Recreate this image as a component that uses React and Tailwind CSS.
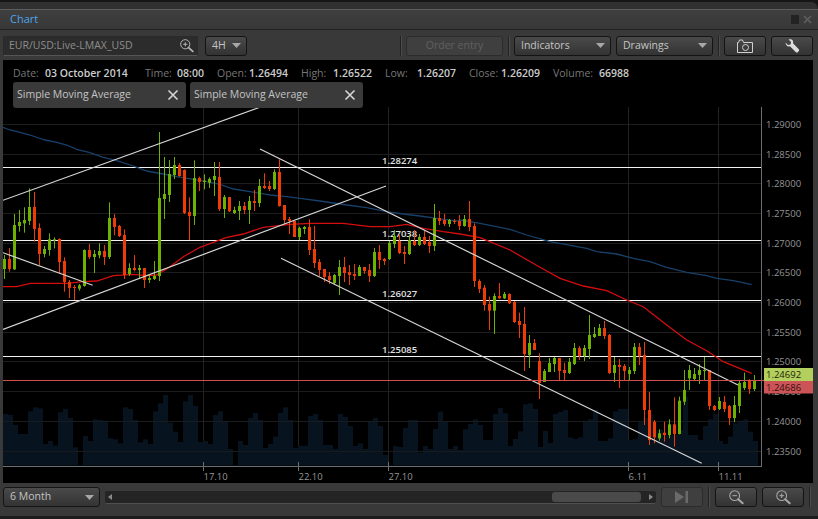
import React from "react";

// [colour(1 green / 0 red), wickTop, bodyTop, bodyBottom, wickBottom] in zoomed crop units
const blocks = [
  [110, [
    [1,435,447,477,507],[0,414,447,477,485],[1,312,345,478,480],[1,300,336,348,365],[1,292,330,340,368],[1,235,291,333,345],[0,246,291,357,395],[0,340,354,432,465],[1,408,417,432,442],[1,370,388,420,437],[1,382,388,390,415],[0,385,387,456,490],[0,442,453,516,545],[0,510,516,534,564],[0,525,531,534,570],[1,522,526,536,542],[1,418,420,528,530],[0,402,420,441,447],[1,420,432,441,489],[1,400,423,436,445],[0,405,423,441,465],[1,277,324,441,447],[0,312,324,351,376],[0,345,348,378,381],[0,358,375,495,507],[1,460,474,492,498],[0,435,474,480,484],[1,465,474,480,507],[0,474,474,510,534],[1,492,504,510,519],[1,453,498,507,510],[1,66,264,498,513],[1,141,252,267,327],[1,150,192,255,276],[1,141,165,195,207],[0,159,165,198,200],[0,178,180,309,312],[0,262,306,318,390],[1,151,204,318,345],[0,200,204,216,243],[1,193,212,216,238],[1,202,207,218,234],[1,156,198,210,258],[0,156,201,297,303],[1,255,261,297,324],[0,261,261,304,306],[1,290,300,309,312],[1,273,288,303,330],[0,276,288,300,312],[1,258,273,300,342],[0,240,273,279,303],[1,207,228,279,291],[0,190,228,234,237],[0,213,228,237,243],[1,178,186,237,240],
    [0,148,186,288,290],[0,285,285,330,342],[0,321,327,333,372],[0,333,333,381,381],[1,350,354,381,390],[1,348,351,357,372],[0,328,351,420,435],[0,348,417,459,474],[0,447,456,480,498],[0,477,477,501,516],[0,486,498,510,522],[1,492,495,519,522],[1,450,471,498,555],[0,441,471,489,516],[0,465,486,495,525],[0,462,492,498,510],[1,465,471,498,498],[0,471,471,483,492],[0,462,480,498,516],[1,414,426,498,501],[0,405,426,450,477],[0,444,447,453,465],[1,393,399,447,450],[1,360,378,402,414],[0,375,393,429,432],[0,408,426,432,462],[1,375,390,432,435],[0,360,393,405,408],[1,372,381,405,408],[0,360,381,402,405],[0,378,396,408,429],[1,282,324,408,423],[0,303,324,333,345],[0,312,330,342,348],[1,327,330,342,351],[0,327,333,336,342],[0,315,333,348,360],[1,315,327,348,350],[0,273,327,351,363],
  ]],
  [190, [
    [0,100,108,273,291],[0,268,273,297,309],[0,285,293,345,362],[0,320,342,362,420],[1,310,318,362,432],[0,279,318,325,327],[1,306,312,325,327],[0,310,312,340,342],[0,333,336,396,399],[0,368,393,405,444],[0,351,402,492,543],[1,435,459,495,534],[0,447,459,480,480],[0,490,513,579,627],[1,537,543,576,576],[1,504,519,546,546],[1,501,504,522,546],[0,504,504,543,570],[0,518,540,549,570],[1,504,516,549,552],[1,459,474,522,525],[0,468,474,498,510],[1,465,474,498,513],[1,375,435,477,507],[1,411,432,441,444],[1,402,414,438,438],[0,393,414,438,447],[0,432,435,549,552],[1,501,525,549,576],[0,507,525,531,594],[0,522,528,543,570],[1,531,540,552,570],[1,459,471,543,552],[0,459,471,498,525],[0,456,495,660,705],
    [0,606,660,750,765],
  ]],
  [380, [
    [0,120,125,172,190],[1,148,160,175,182],[0,125,158,165,185],[1,118,133,165,175],[0,52,133,162,200],[1,50,62,162,163],[1,-30,30,65,75],[1,-45,-30,-5,30],
  ]],
  [0, [
    [1,1104,1122,1137,1140],[1,1092,1110,1125,1152],[1,1071,1110,1113,1140],[0,1110,1110,1218,1230],[0,1215,1218,1230,1233],[1,1191,1203,1227,1230],[0,1188,1206,1227,1236],[0,1215,1218,1254,1275],[1,1188,1215,1254,1266],[1,1140,1149,1218,1239],[1,1118,1146,1164,1170],[0,1137,1143,1167,1182],[1,1125,1140,1167,1173],
  ]],
];

const candles = [];
blocks.forEach(([y0, rows]) => rows.forEach((r) => {
  candles.push({ up: r[0], wt: y0 + r[1] / 3, bt: y0 + r[2] / 3, bb: y0 + r[3] / 3, wb: y0 + r[4] / 3 });
}));

const volTops = [102,105,135,162,162,94,82,85,192,183,197,97,87,114,202,255,168,183,118,120,122,175,178,190,82,87,120,187,178,192,94,70,45,128,155,186,64,45,78,186,183,192,105,94,126,207,255,183,195,114,99,120,204,192,170,99,82,120,204,197,197,108,102,120,195,195,207,102,111,138,198,190,207,126,114,138,225,255,198,201,144,120,120,
  218,198,207,147,95,125,207,198,210,148,132,118,135,180,180,102,84,100,198,177,154,73,70,87,201,153,189,102,96,90,172,177,172,122,118,90,183,183,175,94,87,87,180,178,127,114,100,150,150,165,165,165,150,50,165,165,180,138,118,102,183,192,170,130,122,118,155,183];

const pts = (x0, y0, list) => list.map(([x, y]) => [x0 + x / 3, y0 + y / 3]);
const blue = [
  ...pts(0, 110, [[9,52],[30,60],[60,67],[90,75],[135,90],[170,97],[200,105],[230,118],[270,128],[310,142],[350,152],[400,168],[440,183],[490,192],[530,200],[580,208],[620,215],[660,223],[700,237],[750,245],[800,253]]),
  ...pts(270, 110, [[0,255],[50,260],[90,265],[150,273],[230,285],[290,293],[350,305],[400,312],[450,318],[500,325],[560,333]]),
  ...pts(460, 190, [[0,90],[60,100],[150,118],[200,135],[270,155],[380,175],[410,185],[470,192],[520,205],[570,215],[620,232],[680,247],[740,257],[770,265],[820,272],[875,284]]),
];
const red = [
  ...pts(0, 110, [[9,530],[50,530],[90,520],[200,520],[250,515],[290,513],[340,497],[400,493],[440,497],[470,495],[510,470],[550,440],[600,412],[680,382],[730,372],[790,352]]),
  ...pts(270, 110, [[0,350],[60,343],[120,340],[220,340],[300,350],[360,350],[410,343],[460,355],[520,365]]),
  ...pts(460, 190, [[0,132],[60,143],[150,180],[240,232],[300,265],[370,288],[440,302],[500,330],[550,350],[620,405],[680,450],[740,482],[790,515],[875,550]]),
];
const toPath = (a) => a.map((p) => p[0].toFixed(1) + "," + p[1].toFixed(1)).join(" ");

const gridY = [124.5,154.5,183.5,213.5,243.5,272.5,302.5,332.5,361.5,391.5,421.5,451.5];
const priceLabels = [[124.5,"1.29000"],[154.5,"1.28500"],[183.5,"1.28000"],[213.5,"1.27500"],[243.5,"1.27000"],[272.5,"1.26500"],[302.5,"1.26000"],[332.5,"1.25500"],[361.5,"1.25000"],[391.5,"1.24500"],[421.5,"1.24000"],[451.5,"1.23500"]];
const dates = [[203.5,"17.10"],[298.5,"22.10"],[388.5,"27.10"],[628.5,"6.11"],[718.5,"11.11"]];
const levels = [[167.5,"1.28274"],[240.5,"1.27038"],[300.5,"1.26027"],[356.5,"1.25085"]];
const uiFont = "'Open Sans','Noto Sans',sans-serif";

function Chart() {
  return (
    <svg className="absolute inset-0 h-full w-full" viewBox="3 60 810 423" style={{ fontFamily: uiFont }}>
      {gridY.map((y) => <line key={y} x1="3" x2="761" y1={y} y2={y} stroke="#1d1d1d" />)}
      {dates.map(([x]) => <line key={x} x1={x} x2={x} y1="107" y2="466" stroke="#222222" />)}
      {volTops.map((t, i) => (
        <rect key={i} x={3 + 5 * i} y={380 + t / 3} width="5" height={85.5 - t / 3} fill="#071420" />
      ))}
      {gridY.slice(-3).map((y) => <line key={y} x1="3" x2="761" y1={y} y2={y} stroke="#1d1d1d" strokeOpacity="0.8" />)}
      <line x1="3" x2="761" y1="466.5" y2="466.5" stroke="#6d6d6d" />
      <line x1="761.5" x2="761.5" y1="107" y2="467" stroke="#6d6d6d" />
      {dates.map(([x, l]) => (
        <g key={x}>
          <line x1={x} x2={x} y1="462" y2="471" stroke="#6d6d6d" />
          <text x={x} y="480" fontSize="9.5" fill="#959595">{l}</text>
        </g>
      ))}
      {priceLabels.map(([y, l]) => (
        <text key={l} x="766" y={y + 3.5} fontSize="9.5" fill="#959595">{l}</text>
      ))}
      {levels.map(([y]) => <line key={y} x1="3" x2="761" y1={y} y2={y} stroke="#f2f2f2" strokeWidth="1" />)}
      {levels.map(([y, l]) => (
        <text key={l} x="382" y={y - 4} fontSize="9.5" fontWeight="600" fill="#e2e2e2">{l}</text>
      ))}
      <polyline points={toPath(blue)} fill="none" stroke="#17406a" strokeWidth="1.3" />
      <polyline points={toPath(red)} fill="none" stroke="#d40d0d" strokeWidth="1.3" />
      {candles.map((c, i) => {
        const x = 4.5 + 5 * i;
        const col = c.up ? "#6fb100" : "#ee3c06";
        return (
          <g key={i}>
            <line x1={x} x2={x} y1={c.wt} y2={c.wb} stroke={col} strokeWidth="1" />
            <rect x={x - 1.5} y={c.bt} width="3" height={Math.max(1, c.bb - c.bt)} fill={col} />
          </g>
        );
      })}
      <g stroke="#d6d6d6" strokeWidth="1.2">
        <line x1="3" y1="200.3" x2="262" y2="106.5" />
        <line x1="3" y1="329.5" x2="386" y2="186" />
        <line x1="3" y1="252.7" x2="92.7" y2="285.3" />
        <line x1="260" y1="149" x2="738" y2="385" />
        <line x1="281" y1="258.3" x2="701.7" y2="463.3" />
      </g>
      <line x1="3" x2="764" y1="380.5" y2="380.5" stroke="#d0504e" />
      <rect x="764" y="368" width="50" height="13" fill="#b3cf5d" />
      <rect x="764" y="381" width="50" height="12.5" fill="#cc5456" />
      <text x="766" y="378" fontSize="9.5" fill="#1c2208">1.24692</text>
      <text x="766" y="391" fontSize="9.5" fill="#331010">1.24686</text>
    </svg>
  );
}

const Caret = () => (
  <svg width="9" height="5" viewBox="0 0 9 5"><path d="M0 0h9L4.5 5z" fill="#a8a8a8" /></svg>
);

const Lens = ({ plus, minus, size = 18, color = "#b4b4b4" }) => (
  <svg width={size} height={size} viewBox="0 0 18 18" fill="none" stroke={color}>
    <circle cx="7.5" cy="7.5" r="5.5" strokeWidth="1.2" />
    {(plus || minus) && <path d="M5 7.5h5" strokeWidth="1.2" />}
    {plus && <path d="M7.5 5v5" strokeWidth="1.2" />}
    <path d="M11.5 11.5l5 4.5" strokeWidth="2.2" strokeLinecap="round" />
  </svg>
);

const Sep = () => <div className="h-[20px] w-[2px] shrink-0 border-l border-[#222222] bg-[#4c4c4c]" />;

const btn =
  "flex h-[20px] shrink-0 items-center rounded-[3px] border border-[#141414] bg-gradient-to-b from-[#4a4a4a] to-[#333333] text-[10.5px] text-[#c4c4c4]";

const Info = ({ l, v, lw, vw }) => (
  <div className="flex items-center">
    <span className="text-[#777777]" style={{ width: lw }}>{l}</span>
    <span className="font-semibold text-[#cccccc]" style={{ width: vw }}>{v}</span>
  </div>
);

const Chip = () => (
  <div className="flex h-[26px] w-[173px] items-center justify-between rounded-[3px] bg-[#3a3a3a] pl-[4px] pr-[7px] text-[10.5px] text-[#c4c4c4]">
    <span>Simple Moving Average</span>
    <svg width="12" height="12" viewBox="0 0 12 12" stroke="#d6d6d6" strokeWidth="1.6"><path d="M1.5 1.5l9 9M10.5 1.5l-9 9" /></svg>
  </div>
);

export default function App() {
  return (
    <div className="flex h-[519px] w-[818px] flex-col overflow-hidden bg-[#161616] text-[10.5px]" style={{ fontFamily: uiFont }}>
      <div className="flex h-full flex-col pt-[2px]">
        <div className="h-[7px] shrink-0 rounded-tr-[8px] bg-[#303030]" />
        <div className="flex h-[20px] shrink-0 items-center justify-between border-t border-[#5e5e5e] bg-gradient-to-b from-[#3f3f3f] to-[#383838] pl-[10px] pr-[6px]">
          <span className="text-[11px] font-medium text-[#4da3ea]">Chart</span>
          <div className="flex items-center gap-[4px]">
            <div className="h-[9px] w-[8px] bg-[#232323]" />
            <svg width="9" height="9" viewBox="0 0 9 9" stroke="#5f5f5f" strokeWidth="1.6"><path d="M1 1l7 7M8 1l-7 7" /></svg>
          </div>
        </div>
        <div className="flex h-[31px] shrink-0 items-center border-t border-[#232323] bg-[#393939] pl-[3px] pr-[5px] pt-[1px]">
          <div className="flex h-[20px] w-[195px] items-center justify-between border border-[#2a2a2a] border-b-[#555555] bg-[#2c2c2c] pl-[5px] pr-[3px] text-[#8e8e8e]">
            <span>EUR/USD:Live-LMAX_USD</span>
            <Lens plus size={15} />
          </div>
          <div className={btn + " ml-[7px] w-[42px] justify-between pl-[6px] pr-[5px]"}>
            <span>4H</span><Caret />
          </div>
          <div className="ml-[153px]"><Sep /></div>
          <div className="ml-[4px] flex h-[20px] w-[97px] items-center justify-center rounded-[3px] border border-[#2c2c2c] bg-[#3f3f3f] text-[#606060]">Order entry</div>
          <div className="ml-[5px]"><Sep /></div>
          <div className={btn + " ml-[4px] w-[97px] justify-between pl-[6px] pr-[5px]"}>
            <span>Indicators</span><Caret />
          </div>
          <div className={btn + " ml-[5px] w-[97px] justify-between pl-[6px] pr-[5px]"}>
            <span>Drawings</span><Caret />
          </div>
          <div className="ml-[5px]"><Sep /></div>
          <div className={btn + " ml-[4px] w-[42px] justify-center"}>
            <svg width="18" height="14" viewBox="0 0 18 14" fill="none" stroke="#d0d0d0"><path d="M1.5 3.5h1l1-2.5h3l1 2.5h9v10h-15z" /><circle cx="9.5" cy="8.5" r="3" /></svg>
          </div>
          <div className={btn + " ml-[5px] w-[42px] justify-center"}>
            <svg width="16" height="16" viewBox="0 0 16 16"><path d="M1.5 4.5L4 7l2.5-.5.6-2.4L4.6 1.6C6.4.9 8.4 1.4 9 3c.3.9.2 1.7 0 2.3l5.6 5.6c.7.7.7 1.7 0 2.4l-.6.6c-.7.7-1.7.7-2.4 0L6 8.2C4 9 1.8 7.8 1.5 4.5z" fill="#dcdcdc" /></svg>
          </div>
        </div>
        <div className="flex shrink-0 pl-[3px] pr-[5px] bg-[#393939]">
          <div className="relative h-[423px] w-[810px] bg-black">
            <Chart />
            <div className="relative flex flex-col pl-[10px] pt-[6px]">
              <div className="flex h-[14px] items-center leading-[14px]">
                <Info l="Date:" v="03 October 2014" lw={32} vw={100} />
                <Info l="Time:" v="08:00" lw={32} vw={40} />
                <Info l="Open:" v="1.26494" lw={32} vw={52} />
                <Info l="High:" v="1.26522" lw={32} vw={52} />
                <Info l="Low:" v="1.26207" lw={32} vw={52} />
                <Info l="Close:" v="1.26209" lw={32} vw={52} />
                <Info l="Volume:" v="66988" lw={46} vw={40} />
              </div>
              <div className="mt-[1px] flex gap-[4px] pt-[1px]">
                <Chip /><Chip />
              </div>
            </div>
          </div>
        </div>
        <div className="flex h-[33px] shrink-0 items-center bg-[#393939] pl-[3px] pr-[5px] pb-[5px]">
          <div className={btn + " w-[97px] justify-between pl-[6px] pr-[5px]"}>
            <span>6 Month</span><Caret />
          </div>
          <div className="ml-[5px] flex h-[13px] w-[551px] items-center justify-between rounded-[2px] border-b border-[#505050] bg-[#242424] px-[3px]">
            <svg width="4" height="6" viewBox="0 0 4 6"><path d="M4 0v6L0 3z" fill="#8a8a8a" /></svg>
            <div className="ml-auto mr-[8px] h-[10px] w-[89px] rounded-[3px] bg-[#4a4a4a]" />
            <svg width="4" height="6" viewBox="0 0 4 6"><path d="M0 0v6l4-3z" fill="#8a8a8a" /></svg>
          </div>
          <div className="ml-[5px] flex h-[20px] w-[42px] items-center justify-center rounded-[3px] border border-[#2c2c2c] bg-[#3f3f3f]">
            <svg width="14" height="12" viewBox="0 0 14 12" fill="#6a6a6a"><path d="M0 0l9 6-9 6z" /><rect x="10.5" width="2.5" height="12" /></svg>
          </div>
          <div className="ml-[5px]"><Sep /></div>
          <div className={btn + " ml-[5px] w-[42px] justify-center"}><Lens minus size={16} color="#a8a8a8" /></div>
          <div className={btn + " ml-[5px] w-[42px] justify-center"}><Lens plus size={16} color="#a8a8a8" /></div>
          <div className="ml-[5px]"><Sep /></div>
        </div>
        <div className="h-[1px] grow bg-[#1c1c1c]" />
      </div>
    </div>
  );
}
